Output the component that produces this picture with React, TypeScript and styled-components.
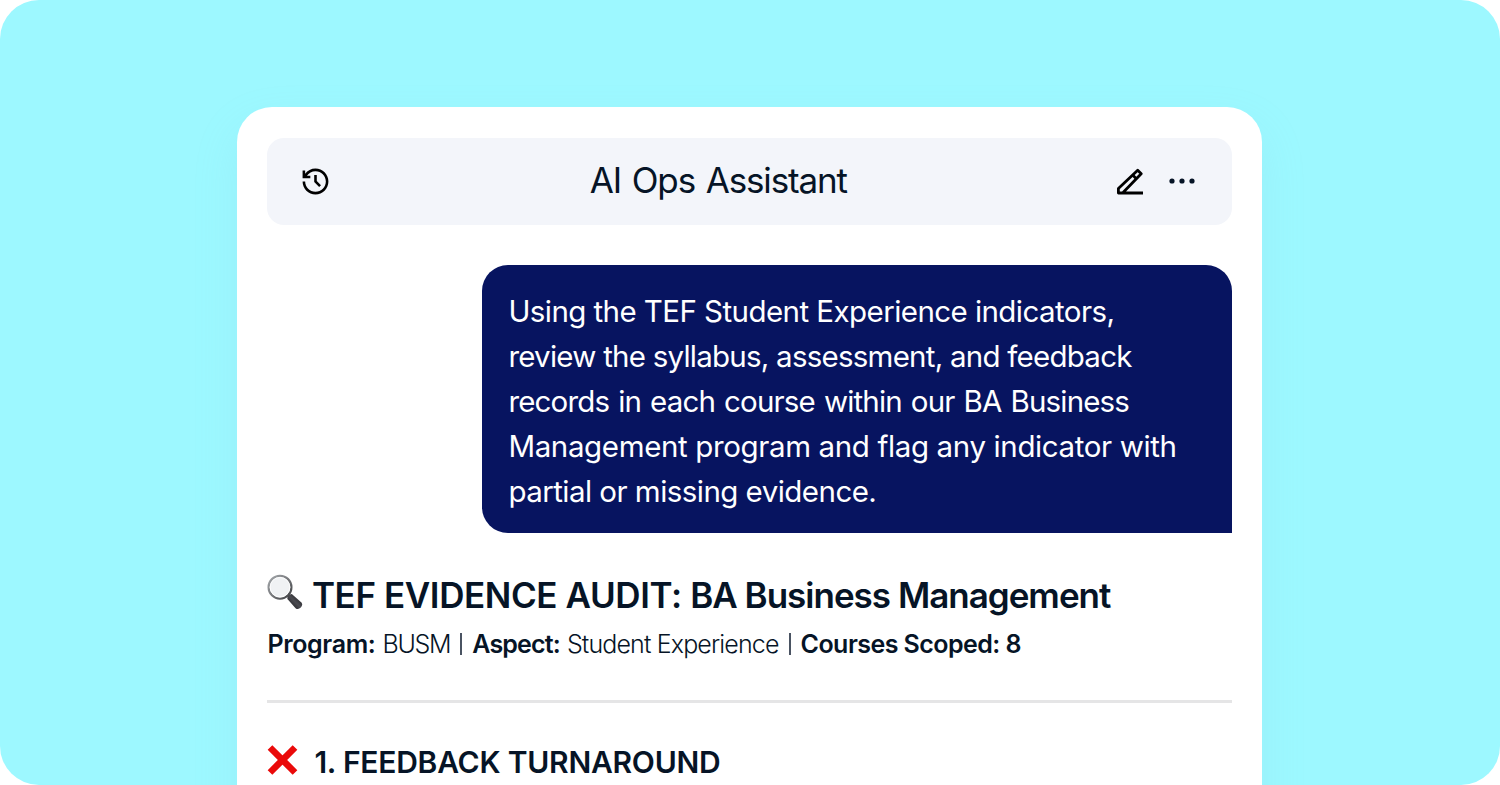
import React from "react"
import styled, { createGlobalStyle } from "styled-components"
import { RiHistoryLine } from "react-icons/ri"

const palette = {
  backdrop: "#9df8ff",
  surface: "#ffffff",
  bar: "#f3f5fa",
  ink: "#061426",
  bubble: "#071460",
  rule: "#e5e5e6",
  danger: "#ea0a0a",
}

const GlobalStyle = createGlobalStyle`
  body {
    margin: 0;
    background: #fff;
    overflow: hidden;
    font-family: Inter, "Liberation Sans", sans-serif;
    color: ${palette.ink};
  }

  * {
    box-sizing: border-box;
  }
`

const Stage = styled.main`
  display: flex;
  width: 1500px;
  height: 785px;
  padding: 107.4px 0 0 237.4px;
  border-radius: 39px;
  background: ${palette.backdrop};
  overflow: hidden;
`

const Panel = styled.section`
  width: 1025px;
  height: 760px;
  flex-shrink: 0;
  padding: 30.6px 30px 0;
  border-radius: 35px 35px 0 0;
  background: ${palette.surface};
  box-shadow: 0 20px 44px rgba(125, 205, 220, 0.18);
`

const Toolbar = styled.header`
  display: grid;
  grid-template-columns: 31px 1fr 78px;
  align-items: center;
  height: 87px;
  padding: 0 37.8px 0 32.6px;
  border-radius: 17px;
  background: ${palette.bar};
`

const ToolGroup = styled.div`
  display: flex;
  align-items: center;
  gap: 26px;

  svg {
    display: block;
    flex-shrink: 0;
  }
`

const Title = styled.h1<{ $tracking: number }>`
  margin: 0;
  padding: 0 11px 2px 0;
  text-align: center;
  font-size: 35px;
  font-weight: 400;
  line-height: 48px;
  letter-spacing: ${(p) => p.$tracking}px;
  word-spacing: 2px;
`

const Bubble = styled.div`
  width: 750px;
  height: 268px;
  margin: 40px 0 0 auto;
  padding: 24px 26px;
  border-radius: 26px 26px 0 26px;
  background: ${palette.bubble};
  color: #fff;
`

const Line = styled.div<{ $tracking: number; $wordGap?: number }>`
  font-size: 29.5px;
  line-height: 45px;
  white-space: nowrap;
  letter-spacing: ${(p) => p.$tracking}px;
  word-spacing: ${(p) => p.$wordGap ?? 0}px;
`

const Heading = styled.h2`
  display: flex;
  align-items: center;
  gap: 8.5px;
  height: 50px;
  margin: 37px 0 0;
  font-size: 35px;
  font-weight: 600;
  white-space: nowrap;

  svg {
    margin-bottom: 4px;
  }
`

const HeadingText = styled.span<{ $tracking: number }>`
  letter-spacing: ${(p) => p.$tracking}px;
`

const Meta = styled.div`
  display: flex;
  align-items: center;
  gap: 7px;
  height: 36px;
  margin-top: 6px;
  font-size: 25px;
  white-space: nowrap;
`

const MetaText = styled.span<{ $strong?: boolean; $tracking: number }>`
  font-weight: ${(p) => (p.$strong ? 600 : 300)};
  letter-spacing: ${(p) => p.$tracking}px;
`

const Divider = styled.span`
  width: 2px;
  height: 22px;
  margin: 0 3px;
  background: #4a5362;
`

const Rule = styled.hr`
  height: 3px;
  margin: 38px 0 0;
  border: 0;
  background: ${palette.rule};
`

const Finding = styled.h3<{ $tracking: number }>`
  display: flex;
  align-items: center;
  gap: 16px;
  height: 40px;
  margin: 39px 0 0;
  font-size: 30px;
  font-weight: 600;
  white-space: nowrap;
  letter-spacing: ${(p) => p.$tracking}px;

  svg {
    margin-bottom: 4px;
  }
`

const PencilIcon = () => (
  <svg width="26" height="27" viewBox="0 0 26 27" fill="none" stroke="#000" strokeWidth="2.8">
    <path d="M26 25H1.4V20.4L20.7 2.2L24.2 5.8L5.6 25" strokeLinejoin="round" />
    <path d="M15.6 7L19.4 10.8" />
  </svg>
)

const MoreIcon = () => (
  <svg width="26" height="6" viewBox="0 0 26 6" fill={palette.ink}>
    <circle cx="3" cy="3" r="2.6" />
    <circle cx="13" cy="3" r="2.6" />
    <circle cx="23" cy="3" r="2.6" />
  </svg>
)

const MagnifierIcon = () => (
  <svg width="36" height="37" viewBox="0 0 36 37">
    <defs>
      <linearGradient id="rim" x1="0" y1="0" x2="1" y2="1">
        <stop offset="0" stopColor="#a4a8ac" />
        <stop offset="0.5" stopColor="#77797c" />
        <stop offset="1" stopColor="#3b3c3f" />
      </linearGradient>
      <linearGradient id="grip" x1="0" y1="1" x2="1" y2="0">
        <stop offset="0" stopColor="#0c0c0f" />
        <stop offset="0.5" stopColor="#4b4b51" />
        <stop offset="1" stopColor="#101013" />
      </linearGradient>
    </defs>
    <path d="M20.5 21L24 24.5" stroke="#77777b" strokeWidth="3" />
    <path d="M20.4 25Q20 20.4 24.8 20L34.4 28.6Q36.2 30.8 33.8 33.6Q31.2 36 28.8 34.4Z" fill="url(#grip)" />
    <circle cx="13" cy="13.2" r="11.4" fill="#f0f2f4" stroke="url(#rim)" strokeWidth="2.2" />
    <circle cx="13" cy="13.2" r="9.9" fill="none" stroke="#fff" strokeWidth="0.9" />
  </svg>
)

const CrossIcon = () => (
  <svg width="31" height="30" viewBox="0 0 31 30" stroke={palette.danger} strokeWidth="6.6">
    <path d="M3 2.5L28 27.5M28 2.5L3 27.5" />
  </svg>
)

const prompt = [
  { text: "Using the TEF Student Experience indicators,", tracking: -0.56 },
  { text: "review the syllabus, assessment, and feedback", tracking: -0.76 },
  { text: "records in each course within our BA Business", tracking: -0.83, wordGap: 1.5 },
  { text: "Management program and flag any indicator with", tracking: -0.37 },
  { text: "partial or missing evidence.", tracking: -0.54 },
]

const App: React.FC = () => {
  return (
    <>
      <GlobalStyle />
      <Stage>
        <Panel>
          <Toolbar>
            <ToolGroup>
              <RiHistoryLine size={31} color="#000" />
            </ToolGroup>
            <Title $tracking={-1.15}>AI Ops Assistant</Title>
            <ToolGroup>
              <PencilIcon />
              <MoreIcon />
            </ToolGroup>
          </Toolbar>
          <Bubble>
            {prompt.map((line) => (
              <Line key={line.text} $tracking={line.tracking} $wordGap={line.wordGap}>
                {line.text}
              </Line>
            ))}
          </Bubble>
          <Heading>
            <MagnifierIcon />
            <HeadingText $tracking={-0.4}>TEF EVIDENCE AUDIT:</HeadingText>
            <HeadingText $tracking={-1.0}>BA Business Management</HeadingText>
          </Heading>
          <Meta>
            <MetaText $strong $tracking={-0.35}>Program:</MetaText>
            <MetaText $tracking={-1.3}>BUSM</MetaText>
            <Divider />
            <MetaText $strong $tracking={-0.83}>Aspect:</MetaText>
            <MetaText $tracking={-0.86}>Student Experience</MetaText>
            <Divider />
            <MetaText $strong $tracking={-0.55}>Courses Scoped: 8</MetaText>
          </Meta>
          <Rule />
          <Finding $tracking={-0.23}>
            <CrossIcon />
            <span>1. FEEDBACK TURNAROUND</span>
          </Finding>
        </Panel>
      </Stage>
    </>
  )
}

export default App
